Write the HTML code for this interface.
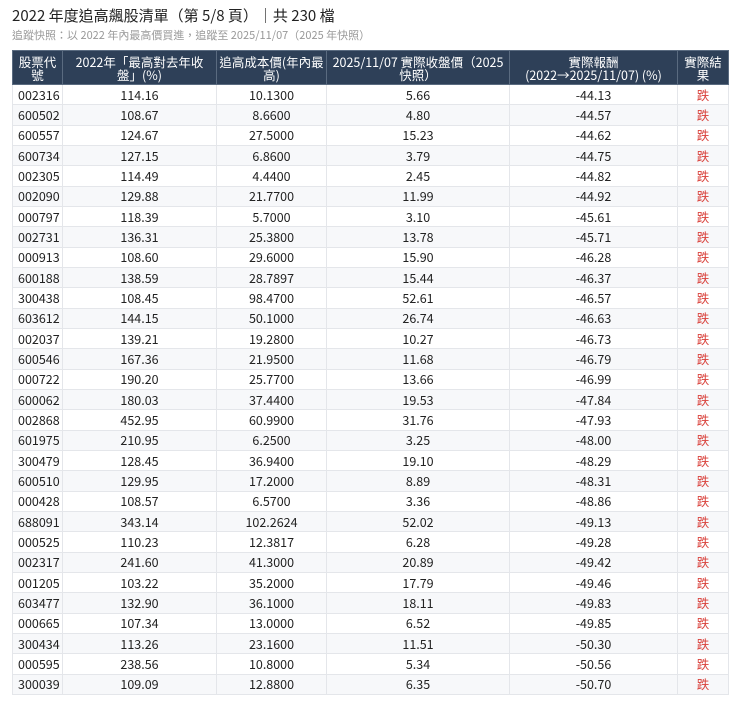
<!DOCTYPE html>
<html><head><meta charset="utf-8"><style>
body{margin:0;background:#fff;font-family:"Noto Sans CJK TC","Liberation Sans",sans-serif;color:#222;}
.t{position:absolute;left:12px;top:6px;font-size:15px;line-height:20px;color:#222;white-space:nowrap;}
.s{position:absolute;left:12px;top:28px;font-size:11px;line-height:14px;color:#999;white-space:nowrap;}
table{position:absolute;left:12px;top:50px;width:716px;border-collapse:collapse;table-layout:fixed;font-size:12.5px;}
th{background:#2e4058;color:#fff;font-weight:normal;height:33px;line-height:13px;padding:0 2px;border:1px solid #5a6b80;text-align:center;font-size:12.5px;white-space:nowrap;overflow:hidden}
td{height:19.33px;padding:0;border:1px solid #e4e6ea;text-align:center;line-height:12px;white-space:nowrap}
td:first-child{text-align:left;padding-left:5px}
tr:nth-child(even) td{background:#f7f8fa}
td.r{color:#d9403a}
</style></head><body>
<div class="t">2022 年度追高飆股清單（第 5/8 頁）｜共 230 檔</div>
<div class="s">追蹤快照：以 2022 年內最高價買進，追蹤至 2025/11/07（2025 年快照）</div>
<table>
<colgroup><col style="width:50px"><col style="width:154px"><col style="width:110px"><col style="width:183px"><col style="width:168px"><col style="width:51px"></colgroup>
<thead><tr><th>股票代<br>號</th><th>2022年「最高對去年收<br>盤」(%)</th><th>追高成本價(年內最<br>高)</th><th>2025/11/07 實際收盤價（2025<br>快照）</th><th>實際報酬<br>(2022→2025/11/07) (%)</th><th>實際結<br>果</th></tr></thead>
<tbody>
<tr><td>002316</td><td>114.16</td><td>10.1300</td><td>5.66</td><td>-44.13</td><td class="r">跌</td></tr>
<tr><td>600502</td><td>108.67</td><td>8.6600</td><td>4.80</td><td>-44.57</td><td class="r">跌</td></tr>
<tr><td>600557</td><td>124.67</td><td>27.5000</td><td>15.23</td><td>-44.62</td><td class="r">跌</td></tr>
<tr><td>600734</td><td>127.15</td><td>6.8600</td><td>3.79</td><td>-44.75</td><td class="r">跌</td></tr>
<tr><td>002305</td><td>114.49</td><td>4.4400</td><td>2.45</td><td>-44.82</td><td class="r">跌</td></tr>
<tr><td>002090</td><td>129.88</td><td>21.7700</td><td>11.99</td><td>-44.92</td><td class="r">跌</td></tr>
<tr><td>000797</td><td>118.39</td><td>5.7000</td><td>3.10</td><td>-45.61</td><td class="r">跌</td></tr>
<tr><td>002731</td><td>136.31</td><td>25.3800</td><td>13.78</td><td>-45.71</td><td class="r">跌</td></tr>
<tr><td>000913</td><td>108.60</td><td>29.6000</td><td>15.90</td><td>-46.28</td><td class="r">跌</td></tr>
<tr><td>600188</td><td>138.59</td><td>28.7897</td><td>15.44</td><td>-46.37</td><td class="r">跌</td></tr>
<tr><td>300438</td><td>108.45</td><td>98.4700</td><td>52.61</td><td>-46.57</td><td class="r">跌</td></tr>
<tr><td>603612</td><td>144.15</td><td>50.1000</td><td>26.74</td><td>-46.63</td><td class="r">跌</td></tr>
<tr><td>002037</td><td>139.21</td><td>19.2800</td><td>10.27</td><td>-46.73</td><td class="r">跌</td></tr>
<tr><td>600546</td><td>167.36</td><td>21.9500</td><td>11.68</td><td>-46.79</td><td class="r">跌</td></tr>
<tr><td>000722</td><td>190.20</td><td>25.7700</td><td>13.66</td><td>-46.99</td><td class="r">跌</td></tr>
<tr><td>600062</td><td>180.03</td><td>37.4400</td><td>19.53</td><td>-47.84</td><td class="r">跌</td></tr>
<tr><td>002868</td><td>452.95</td><td>60.9900</td><td>31.76</td><td>-47.93</td><td class="r">跌</td></tr>
<tr><td>601975</td><td>210.95</td><td>6.2500</td><td>3.25</td><td>-48.00</td><td class="r">跌</td></tr>
<tr><td>300479</td><td>128.45</td><td>36.9400</td><td>19.10</td><td>-48.29</td><td class="r">跌</td></tr>
<tr><td>600510</td><td>129.95</td><td>17.2000</td><td>8.89</td><td>-48.31</td><td class="r">跌</td></tr>
<tr><td>000428</td><td>108.57</td><td>6.5700</td><td>3.36</td><td>-48.86</td><td class="r">跌</td></tr>
<tr><td>688091</td><td>343.14</td><td>102.2624</td><td>52.02</td><td>-49.13</td><td class="r">跌</td></tr>
<tr><td>000525</td><td>110.23</td><td>12.3817</td><td>6.28</td><td>-49.28</td><td class="r">跌</td></tr>
<tr><td>002317</td><td>241.60</td><td>41.3000</td><td>20.89</td><td>-49.42</td><td class="r">跌</td></tr>
<tr><td>001205</td><td>103.22</td><td>35.2000</td><td>17.79</td><td>-49.46</td><td class="r">跌</td></tr>
<tr><td>603477</td><td>132.90</td><td>36.1000</td><td>18.11</td><td>-49.83</td><td class="r">跌</td></tr>
<tr><td>000665</td><td>107.34</td><td>13.0000</td><td>6.52</td><td>-49.85</td><td class="r">跌</td></tr>
<tr><td>300434</td><td>113.26</td><td>23.1600</td><td>11.51</td><td>-50.30</td><td class="r">跌</td></tr>
<tr><td>000595</td><td>238.56</td><td>10.8000</td><td>5.34</td><td>-50.56</td><td class="r">跌</td></tr>
<tr><td>300039</td><td>109.09</td><td>12.8800</td><td>6.35</td><td>-50.70</td><td class="r">跌</td></tr>
</tbody></table>
</body></html>
